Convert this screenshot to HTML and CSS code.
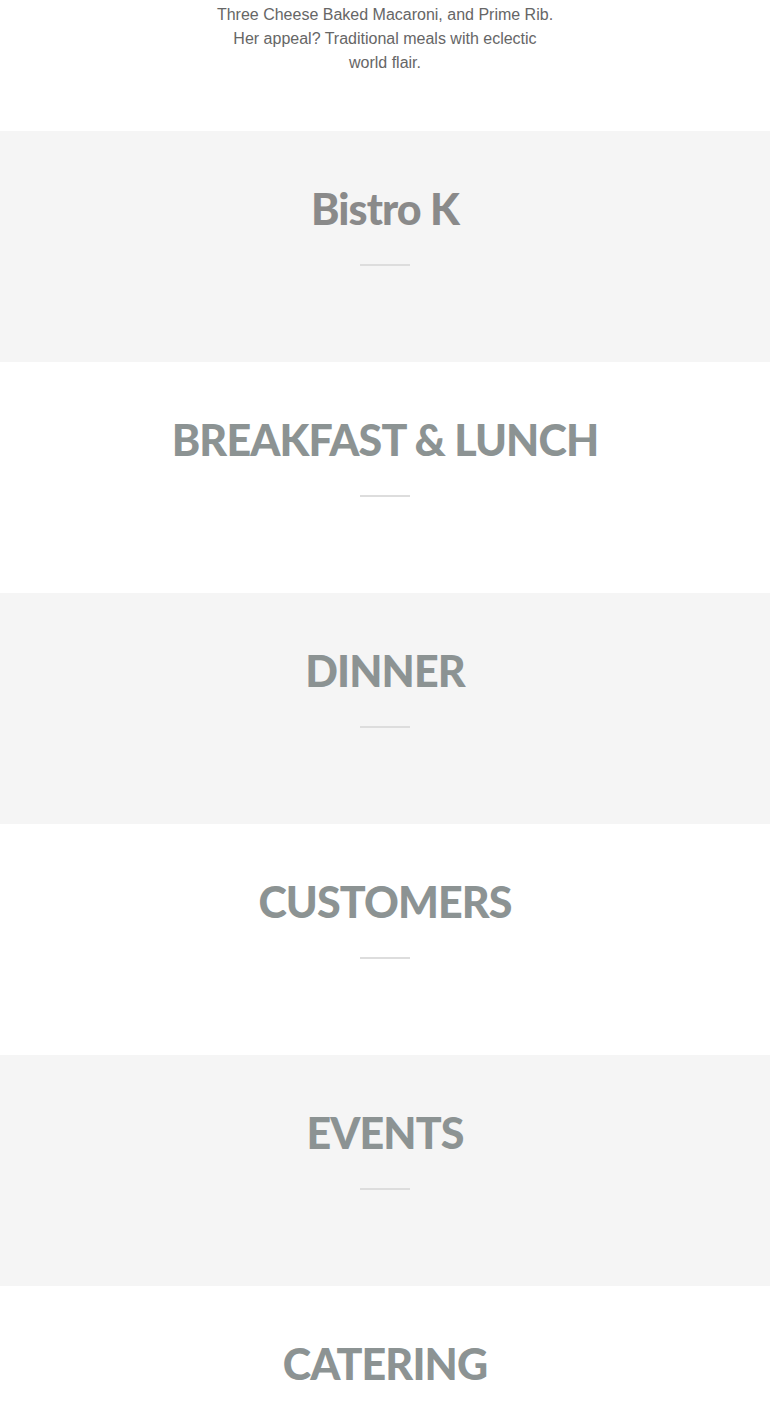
FILE: index.html
```html
<!DOCTYPE html>
<html lang="en">
<head>
  <meta charset="UTF-8">
  <meta name="viewport" content="width=device-width, initial-scale=1.0">
  <title>Bistro K</title>
  <link rel="stylesheet" href="styles.css">
</head>
<body>
  <div class="intro">
    <p class="intro-text">Three Cheese Baked Macaroni, and Prime Rib.<br>Her appeal? Traditional meals with eclectic<br>world flair.</p>
  </div>

  <div class="section section-gray">
    <h2 class="section-title title-mixed">Bistro K</h2>
    <div class="divider"></div>
  </div>

  <div class="section">
    <h2 class="section-title">BREAKFAST &amp; LUNCH</h2>
    <div class="divider"></div>
  </div>

  <div class="section section-gray">
    <h2 class="section-title">DINNER</h2>
    <div class="divider"></div>
  </div>

  <div class="section">
    <h2 class="section-title">CUSTOMERS</h2>
    <div class="divider"></div>
  </div>

  <div class="section section-gray">
    <h2 class="section-title">EVENTS</h2>
    <div class="divider"></div>
  </div>

  <div class="section">
    <h2 class="section-title">CATERING</h2>
    <div class="divider"></div>
  </div>
</body>
</html>
```

FILE: styles.css
```css
:root {
  --text-color: #666666;
  --title-color: #8c9393;
  --gray-bg: #f5f5f5;
  --divider-color: #dddddd;
}

* {
  box-sizing: border-box;
  margin: 0;
  padding: 0;
}

body {
  font-family: 'Liberation Sans', Arial, sans-serif;
  color: var(--text-color);
  background-color: white;
}

.intro {
  height: 131px;
  padding-top: 3px;
}

.intro-text {
  font-size: 16px;
  line-height: 24px;
  text-align: center;
}

.section {
  height: 231px;
  padding-top: 48px;
  display: flex;
  flex-direction: column;
  align-items: center;
}

.section-gray {
  background-color: var(--gray-bg);
}

.section-title {
  font-family: Lato, 'Open Sans', sans-serif;
  font-weight: 900;
  font-size: 43px;
  line-height: 60px;
  color: var(--title-color);
  letter-spacing: -0.9px;
}

.title-mixed {
  color: #8a8a8a;
}

.divider {
  width: 50px;
  height: 2px;
  margin-top: 25px;
  background-color: var(--divider-color);
}
```
